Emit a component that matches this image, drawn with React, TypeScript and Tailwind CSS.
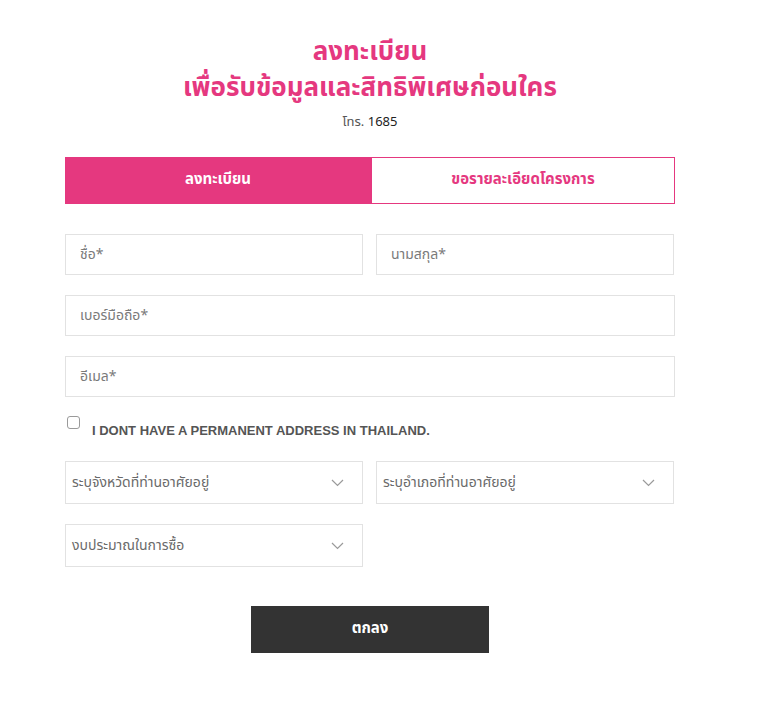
import React from 'react';

const font = { fontFamily: '"Noto Sans Thai", "Liberation Sans", "Noto Sans", sans-serif' };

function TextField({ placeholder, className = '' }: { placeholder: string; className?: string }) {
  return (
    <div className={`flex h-[41px] items-center border border-[#e2e2e2] bg-white px-[14px] text-[14px] text-[#7a7a7a] ${className}`}>
      {placeholder}
    </div>
  );
}

function SelectField({ label }: { label: string }) {
  return (
    <div className="flex h-[43px] w-[298px] items-center justify-between border border-[#e2e2e2] bg-white pl-[6px] pr-[18px] text-[14px] text-[#6a6a6a]">
      <span>{label}</span>
      <svg width="13" height="8" viewBox="0 0 13 8" fill="none" stroke="#9a9a9a" strokeWidth="1.2">
        <path d="M1 1l5.5 5.5L12 1" />
      </svg>
    </div>
  );
}

export default function App() {
  return (
    <div className="min-h-[707px] w-[768px] bg-white" style={font}>
      <div className="ml-[65px] w-[610px] pt-[34px]">
        <div className="flex flex-col items-center text-[26px] font-bold text-[#e5387f]">
          <div className="leading-[36px]">ลงทะเบียน</div>
          <div className="leading-[36px]">เพื่อรับข้อมูลและสิทธิพิเศษก่อนใคร</div>
        </div>
        <p className="mt-[7px] text-center text-[13px] text-[#222]">
          <span className="text-[#555]">โทร.</span> 1685
        </p>

        <div className="mt-[24px] flex h-[47px]">
          <div className="flex w-[306px] items-center justify-center bg-[#e5387f] text-[15px] font-bold text-white">
            ลงทะเบียน
          </div>
          <div className="flex flex-1 items-center justify-center border border-[#e5387f] bg-white text-[15px] font-bold text-[#e5387f]">
            ขอรายละเอียดโครงการ
          </div>
        </div>

        <div className="mt-[30px] flex flex-col gap-[20px]">
          <div className="flex gap-[13px]">
            <TextField placeholder="ชื่อ*" className="w-[298px]" />
            <TextField placeholder="นามสกุล*" className="w-[298px]" />
          </div>
          <TextField placeholder="เบอร์มือถือ*" className="w-[610px]" />
          <TextField placeholder="อีเมล*" className="w-[610px]" />
        </div>

        <label className="ml-[2px] mt-[19px] flex items-start gap-[12px]">
          <span className="block h-[13px] w-[13px] rounded-[3px] border border-[#9a9a9a] bg-white" />
          <span className="mt-[5px] text-[13px] font-bold text-[#555]" style={{ fontFamily: '"Liberation Sans", Arial, sans-serif' }}>
            I DONT HAVE A PERMANENT ADDRESS IN THAILAND.
          </span>
        </label>

        <div className="mt-[21px] flex flex-col gap-[20px]">
          <div className="flex gap-[13px]">
            <SelectField label="ระบุจังหวัดที่ท่านอาศัยอยู่" />
            <SelectField label="ระบุอำเภอที่ท่านอาศัยอยู่" />
          </div>
          <div className="flex">
            <SelectField label="งบประมาณในการซื้อ" />
          </div>
        </div>

        <div className="mt-[39px] flex justify-center">
          <button className="h-[47px] w-[238px] bg-[#333333] text-[15px] font-bold text-white">ตกลง</button>
        </div>
      </div>
    </div>
  );
}
